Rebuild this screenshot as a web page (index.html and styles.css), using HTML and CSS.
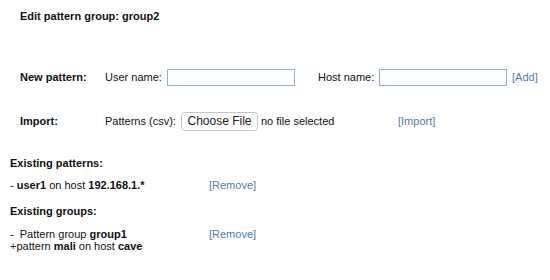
FILE: index.html
```html
<!DOCTYPE html>
<html lang="en">
<head>
  <meta charset="UTF-8" />
  <title>Edit pattern group</title>
  <link rel="stylesheet" href="styles.css">
</head>
<body>
  <h1 class="title">Edit pattern group: group2</h1>

  <div class="form-row first">
    <span class="row-label">New pattern:</span>
    <span class="field-label user">User name:</span>
    <input class="text-input" type="text">
    <span class="field-label host">Host name:</span>
    <input class="text-input" type="text">
    <a class="action add" href="#">[Add]</a>
  </div>

  <div class="form-row">
    <span class="row-label">Import:</span>
    <span class="field-label csv">Patterns (csv):</span>
    <button class="file-button" type="button">Choose File</button>
    <span class="file-name">no file selected</span>
    <a class="action" href="#">[Import]</a>
  </div>

  <div class="existing">
    <h2 class="section-title">Existing patterns:</h2>
    <div class="item">
      <div class="item-text">- <b>user1</b> on host <b>192.168.1.*</b></div>
      <a class="action" href="#">[Remove]</a>
    </div>

    <h2 class="section-title groups">Existing groups:</h2>
    <div class="item">
      <div class="item-text">-&nbsp; Pattern group <b>group1</b><br>+pattern <b>mali</b> on host <b>cave</b></div>
      <a class="action" href="#">[Remove]</a>
    </div>
  </div>
</body>
</html>
```

FILE: styles.css
```css
body {
  margin: 0;
  font-family: "Liberation Sans", Arial, sans-serif;
  font-size: 11px;
  line-height: 12px;
  color: #111;
  background: #fff;
}

.title {
  margin: 0;
  padding: 10px 0 0 20px;
  font-size: 11px;
  line-height: 13px;
}

.form-row {
  display: flex;
  align-items: center;
  height: 20px;
  margin-top: 24px;
  padding-left: 20px;
}
.form-row.first {
  margin-top: 44px;
}

.row-label {
  width: 85px;
  font-weight: bold;
}

.field-label.user { width: 62px; }
.field-label.host { width: 61px; margin-left: 23px; }
.field-label.csv { width: 76px; }

.text-input {
  box-sizing: border-box;
  width: 128px;
  height: 17px;
  margin: 0;
  padding: 0 3px;
  border: 1px solid #8eadd0;
  border-radius: 0;
  font: inherit;
}

.file-button {
  box-sizing: border-box;
  width: 77px;
  height: 19px;
  margin: 0 3px 0 0;
  padding: 0;
  border: 1px solid #c4c4c4;
  border-radius: 4px;
  background: #fff;
  color: #222;
  font-family: "Liberation Sans", Arial, sans-serif;
  font-size: 12px;
}

.file-name {
  width: 137px;
}

a.action {
  color: #4d7db0;
  text-decoration: none;
}
a.add {
  margin-left: 5px;
}

.existing {
  padding-left: 10px;
  margin-top: 26px;
}

.section-title {
  margin: 0 0 9px;
  font-size: 11px;
  line-height: 13px;
}
.section-title.groups {
  margin-top: 14px;
  margin-bottom: 10px;
}

.item {
  display: flex;
}
.item-text {
  width: 199px;
}
```
